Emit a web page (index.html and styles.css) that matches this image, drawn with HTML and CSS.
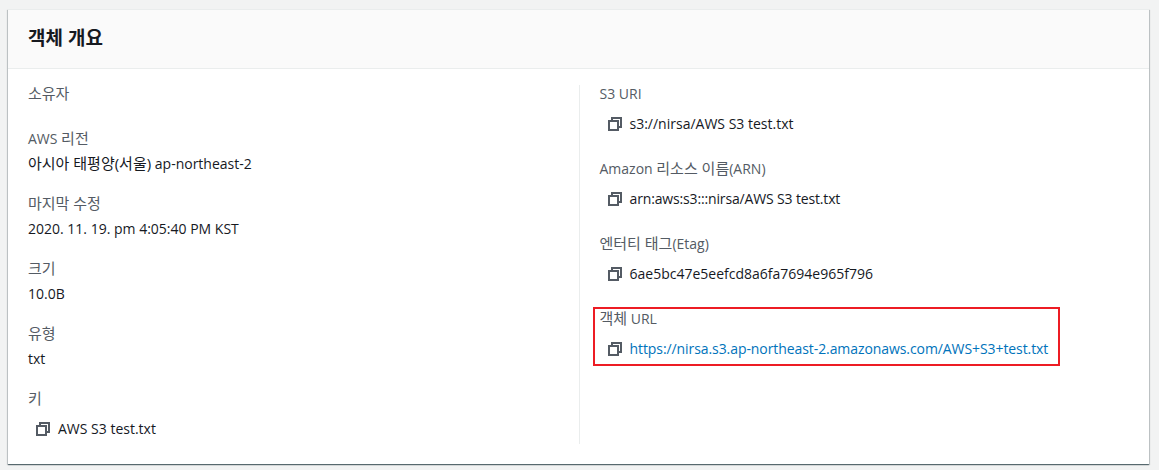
FILE: index.html
```html
<!DOCTYPE html>
<html lang="ko">

<head>
  <meta charset="UTF-8">
  <meta name="viewport" content="width=device-width, initial-scale=1.0">
  <title>객체 개요</title>
  <link rel="stylesheet" href="styles.css">
</head>

<body>
  <svg class="icon-defs" width="0" height="0">
    <symbol id="copy" viewBox="0 0 14 14">
      <path d="M4 3V1h9v9h-2" fill="none" stroke="currentColor" stroke-width="2"/>
      <rect x="1" y="4" width="9" height="9" fill="none" stroke="currentColor" stroke-width="2"/>
    </symbol>
  </svg>

  <div class="card">
    <div class="card-header">
      <h2>객체 개요</h2>
    </div>

    <div class="card-body">
      <div class="column column-left">
        <div class="field field-owner">
          <div class="label"><span class="ko">소유자</span></div>
        </div>
        <div class="field">
          <div class="label">AWS <span class="ko">리전</span></div>
          <div class="value"><span class="ko">아시아 태평양(서울)</span> ap-northeast-2</div>
        </div>
        <div class="field">
          <div class="label"><span class="ko">마지막 수정</span></div>
          <div class="value">2020. 11. 19. pm 4:05:40 PM KST</div>
        </div>
        <div class="field">
          <div class="label"><span class="ko">크기</span></div>
          <div class="value">10.0B</div>
        </div>
        <div class="field">
          <div class="label"><span class="ko">유형</span></div>
          <div class="value">txt</div>
        </div>
        <div class="field">
          <div class="label"><span class="ko">키</span></div>
          <div class="value copy-value">
            <svg class="copy-icon"><use href="#copy"/></svg>
            <span>AWS S3 test.txt</span>
          </div>
        </div>
      </div>

      <div class="column column-right">
        <div class="field">
          <div class="label">S3 URI</div>
          <div class="value copy-value">
            <svg class="copy-icon"><use href="#copy"/></svg>
            <span>s3://nirsa/AWS S3 test.txt</span>
          </div>
        </div>
        <div class="field">
          <div class="label">Amazon <span class="ko">리소스 이름</span>(ARN)</div>
          <div class="value copy-value">
            <svg class="copy-icon"><use href="#copy"/></svg>
            <span class="arn">arn:aws:s3:::nirsa/AWS S3 test.txt</span>
          </div>
        </div>
        <div class="field">
          <div class="label"><span class="ko">엔터티 태그</span>(Etag)</div>
          <div class="value copy-value">
            <svg class="copy-icon"><use href="#copy"/></svg>
            <span>6ae5bc47e5eefcd8a6fa7694e965f796</span>
          </div>
        </div>
        <div class="field highlighted">
          <div class="label"><span class="ko">객체</span> URL</div>
          <div class="value copy-value">
            <svg class="copy-icon"><use href="#copy"/></svg>
            <a href="#">https://nirsa.s3.ap-northeast-2.amazonaws.com/AWS+S3+test.txt</a>
          </div>
        </div>
      </div>
    </div>
  </div>
</body>

</html>
```

FILE: styles.css
```css
* {
  margin: 0;
  padding: 0;
  box-sizing: border-box;
}

body {
  font-family: "Open Sans", "Noto Sans CJK KR", sans-serif;
  font-size: 14px;
  line-height: 22px;
  background: #f2f3f3;
  color: #16191f;
  padding: 9px 10px 6px 8px;
}

.icon-defs {
  display: block;
}

.ko {
  font-size: 15px;
  line-height: 1;
}

.card {
  background: white;
  height: 455px;
  box-shadow: 0 1px 1px 0 rgba(0, 28, 36, 0.5), 1px 1px 1px 0 rgba(0, 28, 36, 0.15), -1px 1px 1px 0 rgba(0, 28, 36, 0.15);
  border-top: 1px solid #eaeded;
}

.card-header {
  background: #fafafa;
  border-bottom: 1px solid #eaeded;
  height: 59px;
  padding: 16px 20px;
}

.card-header h2 {
  font-size: 19px;
  line-height: 24px;
  font-weight: 700;
}

.card-body {
  display: grid;
  grid-template-columns: 1fr 1fr;
  align-items: start;
  padding: 13px 20px 0;
}

.column-left {
  padding-right: 20px;
}

.column-right {
  border-left: 1px solid #eaeded;
  padding-left: 20px;
  margin-top: 3px;
  height: 359px;
}

.column-left .field {
  height: 65px;
}

.column-left .field-owner {
  height: 45px;
}

.column-right .field {
  height: 75px;
}

.label {
  color: #545b64;
  padding-top: 1px;
  margin-bottom: 3px;
}

.column-right .label {
  padding-top: 0;
  line-height: 18px;
  margin-bottom: 10px;
}

.copy-value {
  display: flex;
  align-items: center;
  gap: 8px;
  padding-left: 8px;
}

.column-left .copy-value {
  margin-top: 8px;
}

.copy-icon {
  width: 14px;
  height: 14px;
  color: #545b64;
  flex-shrink: 0;
}

.arn {
  letter-spacing: -0.15px;
}

.value a {
  color: #0073bb;
  letter-spacing: -0.08px;
  text-decoration: none;
}

.highlighted {
  position: relative;
}

.highlighted::after {
  content: "";
  box-sizing: border-box;
  position: absolute;
  left: -7px;
  top: -3px;
  width: 467px;
  height: 59px;
  border: 2px solid #ed1c24;
}
```
